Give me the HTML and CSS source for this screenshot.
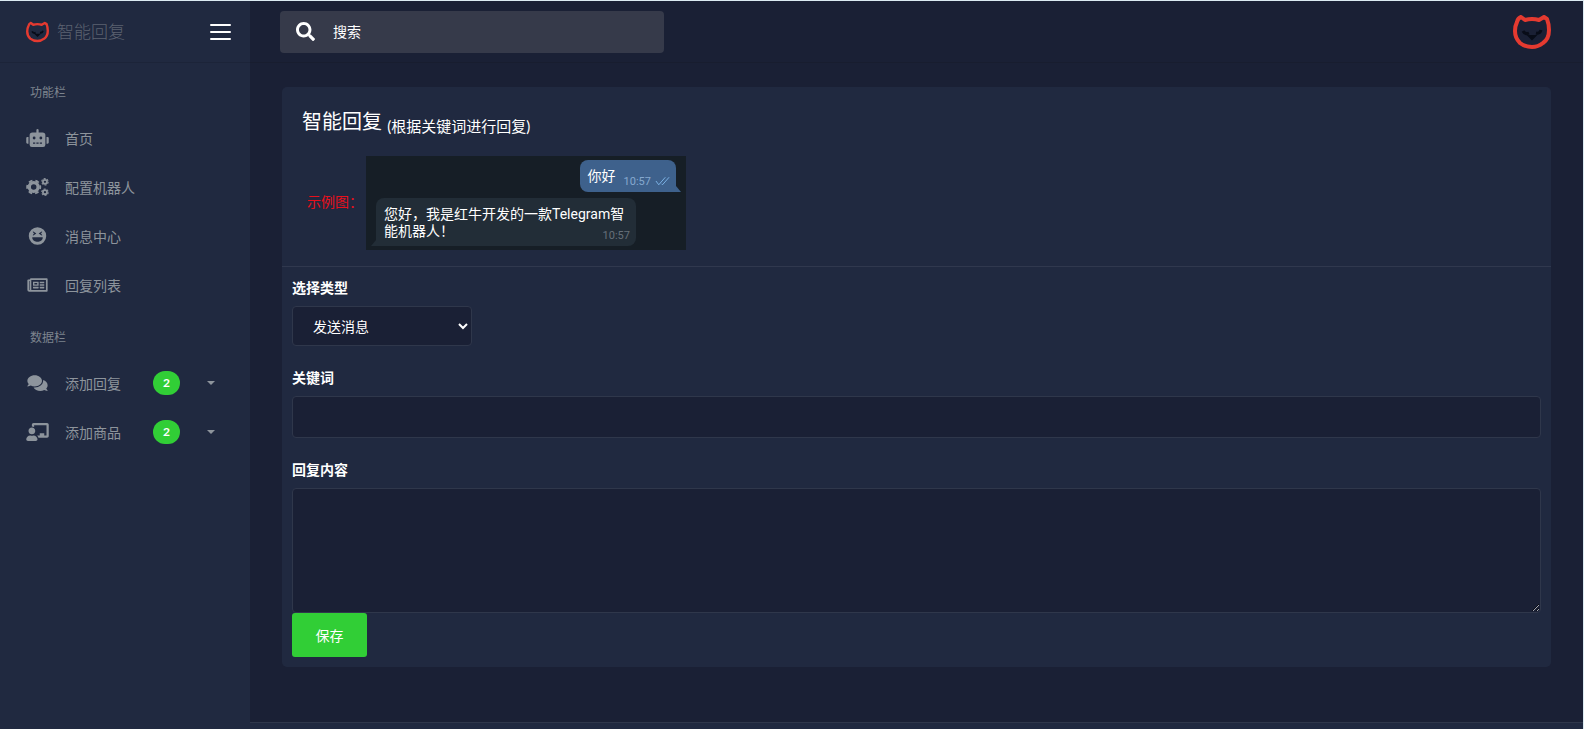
FILE: index.html
```
<!DOCTYPE html>
<html lang="zh-CN">
<head>
    <meta charset="utf-8">
    <title>智能回复</title>
    <link rel="stylesheet" href="styles.css">
</head>
<body>
<svg class="sprite" width="0" height="0">
    <symbol id="cat" viewBox="0 0 38 34">
        <path d="M4 7 Q5 3 8 2 L12 5 Q19 3 26 5 L31 2 L34 4 Q36 9 36 15 Q36 24 30 28 Q25 32 19 32 Q12 32 7 28 Q2 23 2 16 Q2 11 4 7Z" fill="none" stroke="#e53a30" stroke-width="4" stroke-linejoin="round"/>
        <path d="M10 16q2 4 6 2M23 18q4 1 5-3" fill="none" stroke="#080c18" stroke-width="3"/>
        <path d="M16 21h6l-3 3z" fill="#080c18" stroke="#080c18" stroke-width="2"/>
    </symbol>
</svg>

<div class="sidebar">
    <div class="logo-header">
        <a href="#" class="logo">
            <svg class="logo-cat"><use href="#cat"/></svg>
            <span>智能回复</span>
        </a>
        <button class="toggle" aria-label="菜单"><i></i><i></i><i></i></button>
    </div>
    <nav>
        <h4>功能栏</h4>
        <ul>
            <li><a href="#">
                <svg viewBox="0 0 640 512"><path d="M32,224H64V416H32A32,32,0,0,1,0,384V256A32,32,0,0,1,32,224Zm512-48V448a64,64,0,0,1-64,64H160a64,64,0,0,1-64-64V176a80,80,0,0,1,80-80H288V32a32,32,0,0,1,64,0V96H464A80,80,0,0,1,544,176ZM264,256a40,40,0,1,0-40,40A40,40,0,0,0,264,256Zm-8,128H192v32h64Zm96,0H288v32h64ZM456,256a40,40,0,1,0-40,40A40,40,0,0,0,456,256Zm-8,128H384v32h64ZM640,256V384a32,32,0,0,1-32,32H576V224h32A32,32,0,0,1,640,256Z"/></svg>
                <span>首页</span>
            </a></li>
            <li><a href="#">
                <svg viewBox="0 0 640 512">
                    <g class="gear">
                        <circle cx="212" cy="256" r="126" stroke-width="96"/>
                        <circle cx="212" cy="256" r="188" stroke-width="50" stroke-dasharray="110 86.9" stroke-dashoffset="55"/>
                        <circle cx="532" cy="108" r="58" stroke-width="50"/>
                        <circle cx="532" cy="108" r="92" stroke-width="30" stroke-dasharray="56 40.3"/>
                        <circle cx="532" cy="404" r="58" stroke-width="50"/>
                        <circle cx="532" cy="404" r="92" stroke-width="30" stroke-dasharray="56 40.3"/>
                    </g>
                </svg>
                <span>配置机器人</span>
            </a></li>
            <li><a href="#">
                <svg viewBox="0 0 496 512"><path fill-rule="evenodd" d="M248 8a248 248 0 1 0 0 496a248 248 0 1 0 0-496ZM115 140c-6-8 4-16 12-12l80 48c6 4 6 12 0 16l-80 48c-8 4-18-4-12-12l34-44ZM381 140c6-8-4-16-12-12l-80 48c-6 4-6 12 0 16l80 48c8 4 18-4 12-12l-34-44ZM112 288h272c10 0 17 8 16 17c-8 63-60 111-125 111h-54c-65 0-117-48-125-111c-1-9 6-17 16-17Z"/></svg>
                <span>消息中心</span>
            </a></li>
            <li><a href="#">
                <svg viewBox="0 0 576 512"><path d="M552 64H112c-20.858 0-38.643 13.377-45.248 32H24c-13.255 0-24 10.745-24 24v272c0 30.928 25.072 56 56 56h496c13.255 0 24-10.745 24-24V88c0-13.255-10.745-24-24-24zM48 392V144h16v248c0 4.411-3.589 8-8 8s-8-3.589-8-8zm480 8H111.422c.374-2.614.578-5.283.578-8V112h416v288zM172 280h136c6.627 0 12-5.373 12-12v-96c0-6.627-5.373-12-12-12H172c-6.627 0-12 5.373-12 12v96c0 6.627 5.373 12 12 12zm28-80h80v40h-80v-40zm-40 140v-24c0-6.627 5.373-12 12-12h136c6.627 0 12 5.373 12 12v24c0 6.627-5.373 12-12 12H172c-6.627 0-12-5.373-12-12zm192 0v-24c0-6.627 5.373-12 12-12h104c6.627 0 12 5.373 12 12v24c0 6.627-5.373 12-12 12H364c-6.627 0-12-5.373-12-12zm0-144v-24c0-6.627 5.373-12 12-12h104c6.627 0 12 5.373 12 12v24c0 6.627-5.373 12-12 12H364c-6.627 0-12-5.373-12-12zm0 72v-24c0-6.627 5.373-12 12-12h104c6.627 0 12 5.373 12 12v24c0 6.627-5.373 12-12 12H364c-6.627 0-12-5.373-12-12z"/></svg>
                <span>回复列表</span>
            </a></li>
        </ul>
        <h4>数据栏</h4>
        <ul>
            <li><a href="#">
                <svg viewBox="0 0 576 512"><path d="M416 192c0-88.4-93.1-160-208-160S0 103.6 0 192c0 34.3 14.1 65.9 38 92-13.4 30.2-35.5 54.2-35.8 54.5-2.2 2.3-2.8 5.7-1.5 8.7S4.8 352 8 352c36.6 0 66.9-12.3 88.7-25 32.2 15.7 70.3 25 111.3 25 114.9 0 208-71.6 208-160zm122 220c23.9-26 38-57.7 38-92 0-66.9-53.5-124.2-129.3-148.1.9 6.6 1.3 13.3 1.3 20.1 0 105.9-107.7 192-240 192-10.8 0-21.3-.8-31.7-1.9C207.8 439.6 281.8 480 368 480c41 0 79.1-9.2 111.3-25 21.8 12.7 52.1 25 88.7 25 3.2 0 6.1-1.9 7.3-4.8 1.3-2.9.7-6.3-1.5-8.7-.3-.3-22.4-24.2-35.8-54.5z"/></svg>
                <span>添加回复</span>
                <b class="badge">2</b>
                <i class="caret"></i>
            </a></li>
            <li><a href="#">
                <svg viewBox="0 0 640 512"><path d="M208 352c-2.39 0-4.78.35-7.06 1.09C187.98 357.3 174.35 360 160 360c-14.35 0-27.98-2.7-40.95-6.91-2.28-.74-4.66-1.09-7.05-1.09C49.94 352-.33 402.48 0 464.62.14 490.88 21.73 512 48 512h224c26.27 0 47.86-21.12 48-47.38.33-62.14-49.94-112.62-112-112.62zm-48-32c53.02 0 96-42.98 96-96s-42.98-96-96-96-96 42.98-96 96 42.98 96 96 96zM592 0H208c-26.47 0-48 22.25-48 49.59V96c23.42 0 45.1 6.78 64 17.8V64h352v288h-64v-64H384v64h-76.24c19.1 16.69 33.12 38.73 39.69 64H592c26.47 0 48-22.25 48-49.59V49.59C640 22.25 618.47 0 592 0z"/></svg>
                <span>添加商品</span>
                <b class="badge">2</b>
                <i class="caret"></i>
            </a></li>
        </ul>
    </nav>
</div>

<div class="main">
    <div class="navbar">
        <form class="search">
            <button type="button" aria-label="搜索">
                <svg viewBox="0 0 512 512"><path d="M505 442.7L405.3 343c-4.5-4.5-10.6-7-17-7H372c27.6-35.3 44-79.7 44-128C416 93.1 322.9 0 208 0S0 93.1 0 208s93.1 208 208 208c48.3 0 92.7-16.4 128-44v16.3c0 6.4 2.5 12.5 7 17l99.7 99.7c9.4 9.4 24.6 9.4 33.9 0l28.3-28.3c9.4-9.4 9.4-24.6.1-34zM208 336c-70.7 0-128-57.2-128-128 0-70.7 57.2-128 128-128 70.7 0 128 57.2 128 128 0 70.7-57.2 128-128 128z"/></svg>
            </button>
            <input type="text" placeholder="搜索" aria-label="搜索">
        </form>
        <a href="#" class="avatar" aria-label="头像"><svg><use href="#cat"/></svg></a>
    </div>

    <div class="content">
        <div class="card">
            <div class="card-header">
                <h1>智能回复 <small>(根据关键词进行回复)</small></h1>
                <div class="example">
                    <span class="example-label">示例图：</span>
                    <div class="chat">
                        <div class="msg out">
                            <span>你好</span>
                            <time>10:57</time>
                            <svg viewBox="0 0 16 10"><path d="M1 5l3 4 7-8M7 8l1 1 7-8"/></svg>
                        </div>
                        <div class="msg in">
                            <p>您好，我是红牛开发的一款Telegram智<br>能机器人！</p>
                            <time>10:57</time>
                        </div>
                    </div>
                </div>
            </div>
            <form class="card-body">
                <label for="type">选择类型</label>
                <select id="type">
                    <option>发送消息</option>
                </select>
                <label for="keyword">关键词</label>
                <input type="text" id="keyword">
                <label for="reply">回复内容</label>
                <textarea id="reply"></textarea>
                <button type="button" class="save">保存</button>
            </form>
        </div>
    </div>
    <footer></footer>
</div>
</body>
</html>
```

FILE: styles.css
```
* {
    box-sizing: border-box;
}
body {
    margin: 0;
    min-height: 100vh;
    display: flex;
    border-top: 1px solid #dcebf2;
    border-right: 1px solid #dcebf2;
    background: #1a2035;
    color: #fff;
    font-family: Lato, "Noto Sans CJK SC", sans-serif;
    font-size: 14px;
}
a {
    color: inherit;
    text-decoration: none;
}
input, select, textarea, button {
    font: inherit;
    color: #fff;
}
.sprite {
    position: absolute;
}

/* sidebar */
.sidebar {
    width: 250px;
    flex-shrink: 0;
    background: #202940;
    color: #8d949c;
}
.logo-header {
    height: 62px;
    padding: 0 19px 0 26px;
    display: flex;
    align-items: center;
    justify-content: space-between;
    border-bottom: 1px solid #1c2439;
}
.logo {
    display: flex;
    align-items: center;
    gap: 8px;
    color: #5c6270;
    font-size: 17px;
    font-weight: 300;
}
.logo span {
    padding-bottom: 3px;
}
.logo-cat {
    width: 23px;
    height: 22px;
}
.toggle {
    width: 21px;
    padding: 0;
    border: 0;
    background: none;
    display: grid;
    gap: 5px;
}
.toggle i {
    height: 2px;
    border-radius: 1px;
    background: #fff;
}
nav {
    padding-top: 1px;
}
nav h4 {
    margin: 0;
    padding: 20px 30px 11px;
    font-size: 12px;
    line-height: 18px;
    font-weight: normal;
    color: #7d848e;
}
nav ul {
    margin: 0;
    padding: 0;
    list-style: none;
}
nav li a {
    height: 49px;
    padding: 0 35px 0 26px;
    display: flex;
    align-items: center;
}
nav li svg {
    width: 23px;
    height: 18px;
    margin-right: 16px;
    fill: #8d949c;
}
.gear {
    fill: none;
    stroke: #8d949c;
}
.badge {
    margin-left: auto;
    margin-right: 27px;
    width: 27px;
    height: 24px;
    line-height: 24px;
    border-radius: 12px;
    background: #31ce36;
    color: #fff;
    font-size: 12px;
    text-align: center;
}
.caret {
    border: 4px solid transparent;
    border-top-color: #8d949c;
    border-bottom: 0;
}

/* top bar */
.main {
    flex: 1;
    display: flex;
    flex-direction: column;
}
.navbar {
    height: 62px;
    padding: 0 32px 0 30px;
    display: flex;
    align-items: center;
    justify-content: space-between;
    border-bottom: 1px solid #181d2f;
}
.search {
    width: 384px;
    height: 42px;
    display: flex;
    align-items: center;
    border-radius: 4px;
    background: #363a4a;
}
.search button {
    padding: 0 16px;
    border: 0;
    background: none;
}
.search svg {
    width: 19px;
    height: 19px;
    display: block;
    fill: #fff;
}
.search input {
    flex: 1;
    border: 0;
    background: none;
    outline: none;
}
.search input::placeholder {
    color: #fff;
}
.avatar svg {
    display: block;
    width: 38px;
    height: 34px;
}

/* card */
.content {
    flex: 1;
    padding: 24px 32px;
}
.card {
    border-radius: 5px;
    background: #202940;
}
.card-header {
    padding: 20px 20px 16px;
    border-bottom: 1px solid #30384e;
}
h1 {
    margin: 0 0 21px;
    font-size: 20px;
    line-height: 28px;
    font-weight: normal;
}
h1 small {
    font-size: 15px;
    line-height: 16px;
    vertical-align: -3px;
}
.example {
    display: flex;
    align-items: center;
}
.example-label {
    width: 64px;
    padding: 0 0 4px 5px;
    white-space: nowrap;
    color: #e8101c;
}
.chat {
    width: 320px;
    height: 94px;
    padding: 4px 10px;
    display: flex;
    flex-direction: column;
    gap: 6px;
    background: #161e26;
    font-family: Roboto, "Noto Sans CJK SC", sans-serif;
}
.msg {
    position: relative;
    display: flex;
    align-items: flex-end;
    border-radius: 8px;
    line-height: 17px;
}
/* bubble tails */
.msg::after {
    content: "";
    position: absolute;
    bottom: 0;
    border-bottom: 6px solid #3e618c;
}
.out::after {
    left: 100%;
    border-right: 5px solid transparent;
}
.in::after {
    right: 100%;
    border-bottom-color: #222d37;
    border-left: 5px solid transparent;
}
.msg time {
    font-size: 11px;
    line-height: 13px;
}
.out {
    align-self: flex-end;
    height: 32px;
    padding: 0 6px 4px 8px;
    border-bottom-right-radius: 0;
    background: #3e618c;
}
.out span {
    margin-right: 8px;
    padding-bottom: 3px;
}
.out time {
    color: #86a9cf;
}
.out svg {
    width: 15px;
    height: 10px;
    margin: 0 0 2px 4px;
    fill: none;
    stroke: #7fb6ea;
}
.in {
    align-self: flex-start;
    width: 260px;
    height: 49px;
    padding: 0 6px 4px 8px;
    border-bottom-left-radius: 0;
    background: #222d37;
}
.in p {
    margin: 0 -40px 2px 0;
    flex: 1;
    white-space: nowrap;
}
.in time {
    color: #66707a;
}

/* form */
.card-body {
    padding: 11px 10px 10px;
    display: flex;
    flex-direction: column;
    align-items: flex-start;
}
.card-body label {
    margin-bottom: 8px;
    line-height: 20px;
    font-weight: bold;
}
.card-body select,
.card-body input,
.card-body textarea {
    width: 100%;
    padding: 8px 16px;
    border: 1px solid #2f374b;
    border-radius: 4px;
    background: #1a2035;
}
.card-body select {
    width: 180px;
    height: 40px;
    padding: 0 0 0 16px;
    margin-bottom: 22px;
}
.card-body input {
    height: 42px;
    margin-bottom: 22px;
}
.card-body textarea {
    height: 125px;
    display: block;
}
.save {
    width: 75px;
    height: 44px;
    border: 0;
    border-radius: 3px;
    background: #31ce36;
}
footer {
    height: 7px;
    border-top: 1px solid #2f374b;
    background: #202940;
}
```
